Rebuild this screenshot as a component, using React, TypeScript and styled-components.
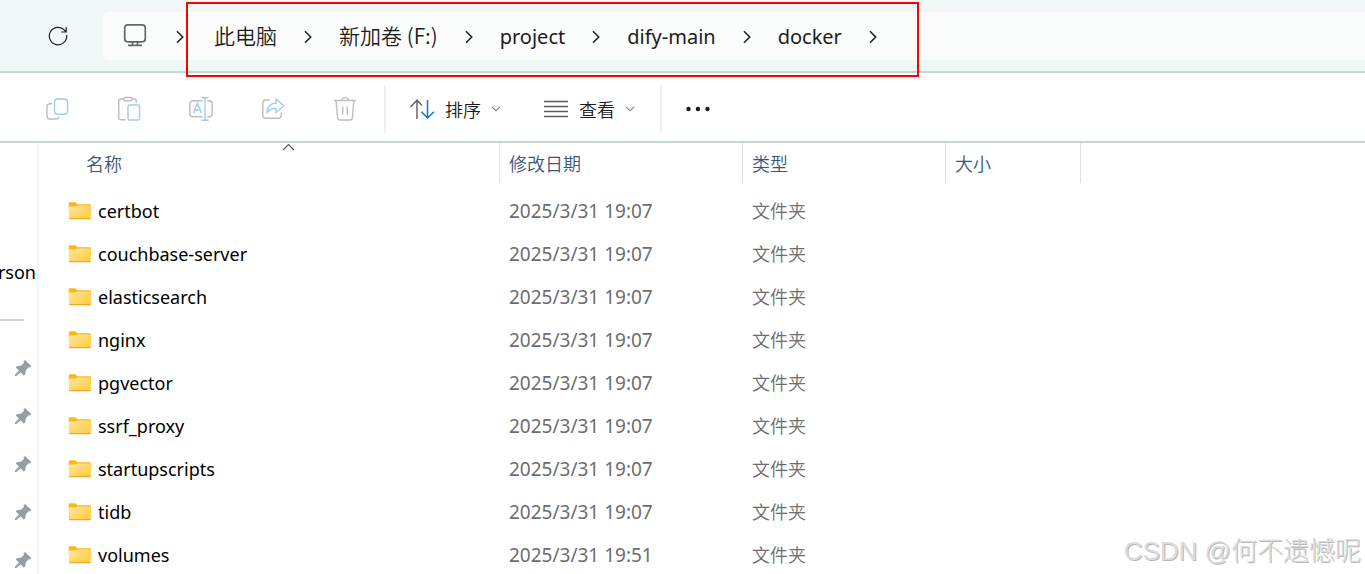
import React from "react";
import styled, { createGlobalStyle } from "styled-components";

const GlobalStyle = createGlobalStyle`
  * { box-sizing: border-box; }
  body {
    margin: 0;
    background: #fff;
    font-family: "Noto Sans", "Noto Sans CJK SC", sans-serif;
    color: #1b1b1b;
  }
  button {
    border: 0;
    padding: 0;
    background: none;
    font: inherit;
    color: inherit;
  }
  svg { display: block; flex: none; }
`;

const Window = styled.div`
  position: relative;
  display: flex;
  flex-direction: column;
  height: 100vh;
  overflow: hidden;
`;

const NavBar = styled.header`
  flex: none;
  display: flex;
  align-items: center;
  height: 73px;
  padding-left: 46px;
  background: #eff7f7;
  border-bottom: 2px solid #c0d9d3;
`;

const RefreshButton = styled.button`
  margin-right: 33px;
`;

const AddressBar = styled.nav`
  flex: 1;
  display: flex;
  align-items: center;
  height: 48px;
  padding-left: 20px;
  background: #fbfdfc;
  border-radius: 6px 0 0 6px;
`;

const RootChevron = styled.button`
  margin: 2px 7px 0 29px;
`;

const Trail = styled.ol`
  position: relative;
  display: flex;
  align-items: center;
  margin: 0;
  padding: 0 0 0 23px;
  list-style: none;

  &::after {
    content: "";
    position: absolute;
    inset: -10px -15px -17px -5px;
    border: 2px solid #fe0000;
    pointer-events: none;
  }
`;

const Crumb = styled.li`
  display: flex;
  align-items: center;
  height: 48px;
`;

const CrumbButton = styled.button<{ $cjk?: boolean }>`
  padding: ${(p) => (p.$cjk ? "0 0 2px" : "2px 0 0")};
  font-size: ${(p) => (p.$cjk ? 21 : 20)}px;
  line-height: 32px;
  font-family: ${(p) => (p.$cjk ? '"Noto Sans CJK SC"' : '"Noto Sans"')}, sans-serif;
  font-weight: ${(p) => (p.$cjk ? 350 : 400)};
  white-space: nowrap;
`;

const CrumbChevron = styled.button`
  display: flex;
  justify-content: center;
  width: 62px;
  padding-top: 2px;
`;

const Toolbar = styled.div`
  flex: none;
  display: flex;
  align-items: center;
  height: 70px;
  padding: 4px 0 0 45px;
  border-bottom: 2px solid #c0d9d3;
`;

const IconGroup = styled.div`
  display: flex;
  align-items: center;
  gap: 48px;
  padding-right: 27px;
`;

const Separator = styled.span`
  width: 2px;
  height: 48px;
  background: #efefef;
`;

const MenuGroup = styled.div`
  display: flex;
  gap: 42px;
  padding: 0 25px 0 23px;
`;

const MenuButton = styled.button`
  display: flex;
  align-items: center;
  gap: 10px;
  font: 350 18px/28px "Noto Sans CJK SC", sans-serif;
`;

const MoreButton = styled.button`
  margin-left: 23px;
`;

const Body = styled.div`
  flex: 1;
  display: flex;
  min-height: 0;
`;

const Sidebar = styled.aside`
  flex: none;
  width: 39px;
  overflow: hidden;
  border-right: 2px solid #f5f5f5;
`;

const AccountName = styled.div`
  display: flex;
  justify-content: flex-end;
  width: 36px;
  margin-top: 114px;
  overflow: hidden;
  font-size: 18px;
  line-height: 30px;
  color: #000;
`;

const SidebarRule = styled.hr`
  width: 24px;
  height: 2px;
  margin: 32px 0 23px;
  border: 0;
  background: #d5d5d5;
`;

const PinList = styled.ul`
  margin: 0;
  padding: 0 0 0 14px;
  list-style: none;
`;

const PinItem = styled.li`
  display: flex;
  align-items: center;
  height: 48px;
`;

const Content = styled.main`
  flex: 1;
  min-width: 0;
  overflow: hidden;
`;

const FileTable = styled.table`
  width: 100%;
  table-layout: fixed;
  border-collapse: separate;
  border-spacing: 0;
`;

const Col = styled.col<{ $width?: number }>`
  width: ${(p) => (p.$width ? `${p.$width}px` : "auto")};
`;

const HeadCell = styled.th<{ $inset?: number }>`
  position: relative;
  height: 40px;
  padding: 0 0 0 ${(p) => p.$inset ?? 9}px;
  border-right: 1px solid #e2e2e2;
  text-align: left;
  font: 350 18px/28px "Noto Sans CJK SC", sans-serif;
  color: #3c5677;

  &:last-child { border-right: 0; }
`;

const SortMark = styled.span`
  position: absolute;
  top: 0;
  left: 243px;
`;

const Rows = styled.tbody`
  &::before {
    content: "";
    display: table-row;
    height: 6px;
  }
`;

const Cell = styled.td`
  height: 43px;
  padding: 0 0 0 9px;
  font-size: 18px;
  line-height: 28px;
  color: #6d6d6d;
  white-space: nowrap;
`;

const DateCell = styled(Cell)`
  font-size: 19px;
`;

const TypeCell = styled(Cell)`
  padding-bottom: 2px;
  font-family: "Noto Sans CJK SC", sans-serif;
  font-weight: 350;
`;

const NameCell = styled(Cell)`
  padding-left: 29px;
  color: #000;
`;

const FileName = styled.span`
  display: flex;
  align-items: center;
  gap: 7px;
`;

const Watermark = styled.div`
  position: absolute;
  right: 4px;
  bottom: 4px;
  font: 300 26px/38px "Liberation Sans", "Noto Sans CJK SC", sans-serif;
  color: #dcdcdc;
  text-shadow: 1px 1px 0 #b8b8b8;
  white-space: nowrap;
  pointer-events: none;
`;

const GREY = "#bdbdbd";
const BLUE = "#9bcdf3";

const Chevron = () => (
  <svg width="8" height="14" viewBox="0 0 8 14" fill="none" stroke="#222" strokeWidth="1.6">
    <path d="M1 1.2 6.7 7 1 12.8" />
  </svg>
);

const SmallDown = () => (
  <svg width="10" height="6" viewBox="0 0 10 6" fill="none" stroke="#777" strokeWidth="1.1">
    <path d="M1 .8 5 4.8 9 .8" />
  </svg>
);

const RefreshIcon = () => (
  <svg width="24" height="24" viewBox="0 0 24 24" fill="none" stroke="#222" strokeWidth="1.2">
    <path d="M20.7 11A8.700 8.700 0 1 1 18.500 6.200L20 8M20.200 3V8H15.200" />
  </svg>
);

const MonitorIcon = () => (
  <svg width="24" height="26" viewBox="0 0 24 26" fill="none" stroke="#666" strokeWidth="1.7">
    <rect x="1.7" y="1.8" width="20.6" height="17" rx="3" />
    <path d="M9.5 19v3M14.5 19v3M5 22.3h14" />
  </svg>
);

const CopyIcon = () => (
  <svg width="24" height="24" viewBox="0 0 24 24" fill="none" strokeWidth="1.4">
    <path stroke={GREY} d="M7.2 6.8H5A3 3 0 0 0 2 9.8V19a3 3 0 0 0 3 3h6.2a3 3 0 0 0 3-2.5" />
    <rect stroke={BLUE} x="9.500" y="2" width="13" height="15.200" rx="3" />
  </svg>
);

const PasteIcon = () => (
  <svg width="24" height="26" viewBox="0 0 24 26" fill="none" strokeWidth="1.4">
    <path stroke={GREY} d="M7 3H3.500A1.800 1.800 0 0 0 1.700 4.800V22A1.800 1.800 0 0 0 3.500 23.800H8.500M15 3h2.500A1.800 1.800 0 0 1 19.300 4.800V7" />
    <rect stroke={GREY} x="6.500" y="1.500" width="8.500" height="3.200" rx="1.600" />
    <rect stroke={BLUE} x="11" y="9" width="11.500" height="15" rx="1.500" />
  </svg>
);

const RenameIcon = () => (
  <svg width="24" height="26" viewBox="0 0 24 26" fill="none" strokeWidth="1.4">
    <path stroke={GREY} fill="#fafafa" d="M13.500 4.800H4A3.200 3.200 0 0 0 .8 8V17.500A3.200 3.200 0 0 0 4 20.700h9.500M18.200 4.800H20A3.200 3.200 0 0 1 23.200 8v9.500A3.200 3.200 0 0 1 20 20.700h-1.800" />
    <path stroke={BLUE} d="M4.500 17 8.500 7.500 12.500 17M5.800 14h5.400M12.500 1.800h7M12.500 24.200h7M16 1.800V24.200" />
  </svg>
);

const ShareIcon = () => (
  <svg width="24" height="24" viewBox="0 0 24 24" fill="none" strokeWidth="1.4">
    <path stroke={GREY} d="M8.500 3H5A3.200 3.200 0 0 0 1.800 6.200V18A3.200 3.200 0 0 0 5 21.200H17A3.200 3.200 0 0 0 20.200 18V15.500" />
    <path stroke={BLUE} strokeLinejoin="round" d="M15 2 22.800 8.800 15 15.500V11.500Q8.500 11.200 6 16 6 6.800 15 6Z" />
  </svg>
);

const TrashIcon = () => (
  <svg width="24" height="26" viewBox="0 0 24 26" fill="none" stroke={GREY} strokeWidth="1.4">
    <path d="M1 4.500H23M8.300 4.500A3.700 2.900 0 0 1 15.700 4.500M3 4.500 4.700 22.300A1.900 1.900 0 0 0 6.600 24H17.400A1.900 1.900 0 0 0 19.300 22.300L21 4.500M9.700 10.500V18.500M14.300 10.500V18.500" />
  </svg>
);

const SortIcon = () => (
  <svg width="26" height="22" viewBox="0 0 26 22" fill="none" strokeWidth="1.5">
    <path stroke="#666" d="M8 21V2M1.500 9 8 2.200 13 7.500" />
    <path stroke="#0b79d0" d="M18.500 2V20.500M12.500 13.700 18.500 20 25 13.700" />
  </svg>
);

const ViewIcon = () => (
  <svg width="26" height="18" viewBox="0 0 26 18" stroke="#5c5c5c" strokeWidth="1.400">
    <path d="M1 1.500H25M1 6.500H25M1 11.500H25M1 16.500H25" />
  </svg>
);

const MoreIcon = () => (
  <svg width="26" height="6" viewBox="0 0 26 6" fill="#1b1b1b">
    <circle cx="3.500" cy="3" r="2.200" />
    <circle cx="12.900" cy="3" r="2.200" />
    <circle cx="22.500" cy="3" r="2.200" />
  </svg>
);

const FolderIcon = () => (
  <svg width="23" height="18" viewBox="0 0 23 18">
    <defs>
      <linearGradient id="folder" x1="0" y1="0" x2="1" y2="1">
        <stop offset="0" stopColor="#ffe6a0" />
        <stop offset="1" stopColor="#ffc937" />
      </linearGradient>
    </defs>
    <path fill="#fbb917" d="M.8 1.200Q.8.200 1.800.200H7.500L9.500 2.300H22Q23 2.300 23 3.300V10H.8Z" />
    <path fill="url(#folder)" d="M1 4.500H7.500L9.200 3.400H22.800V16Q22.800 17 21.800 17H2Q1 17 1 16Z" />
    <path fill="#eda91f" d="M1 16H22.800Q22.800 17.200 21.800 17.200H2Q1 17.200 1 16Z" />
  </svg>
);

const PinIcon = () => (
  <svg width="18" height="18" viewBox="0 0 18 18" fill="#929ea4">
    <path d="M11 1 17.200 6.800 16.300 8.200 14.200 8.500 11.800 11.400 11.200 15.600 9.600 16.400 6.600 13.300 2.300 17 .9 17 1 15.700 4.900 11.500 1.900 8.500 2.800 7.300 6.800 6.800 9.800 4.200 9.700 2.200Z" />
  </svg>
);

const tools = [
  { label: "复制", icon: <CopyIcon /> },
  { label: "粘贴", icon: <PasteIcon /> },
  { label: "重命名", icon: <RenameIcon /> },
  { label: "共享", icon: <ShareIcon /> },
  { label: "删除", icon: <TrashIcon /> },
];

const path = ["此电脑", "新加卷 (F:)", "project", "dify-main", "docker"];

const folders = [
  ["certbot", "2025/3/31 19:07"],
  ["couchbase-server", "2025/3/31 19:07"],
  ["elasticsearch", "2025/3/31 19:07"],
  ["nginx", "2025/3/31 19:07"],
  ["pgvector", "2025/3/31 19:07"],
  ["ssrf_proxy", "2025/3/31 19:07"],
  ["startupscripts", "2025/3/31 19:07"],
  ["tidb", "2025/3/31 19:07"],
  ["volumes", "2025/3/31 19:51"],
];

export default function App() {
  return (
    <Window>
      <GlobalStyle />
      <NavBar>
        <RefreshButton aria-label="刷新"><RefreshIcon /></RefreshButton>
        <AddressBar aria-label="地址">
          <MonitorIcon />
          <RootChevron aria-label="展开"><Chevron /></RootChevron>
          <Trail>
            {path.map((name, i) => (
              <Crumb key={name}>
                <CrumbButton $cjk={i < 2}>{name}</CrumbButton>
                <CrumbChevron aria-label={`展开 ${name}`}><Chevron /></CrumbChevron>
              </Crumb>
            ))}
          </Trail>
        </AddressBar>
      </NavBar>

      <Toolbar role="toolbar">
        <IconGroup>
          {tools.map((t) => (
            <button key={t.label} aria-label={t.label} disabled>{t.icon}</button>
          ))}
        </IconGroup>
        <Separator />
        <MenuGroup>
          <MenuButton><SortIcon />排序<SmallDown /></MenuButton>
          <MenuButton><ViewIcon />查看<SmallDown /></MenuButton>
        </MenuGroup>
        <Separator />
        <MoreButton aria-label="更多"><MoreIcon /></MoreButton>
      </Toolbar>

      <Body>
        <Sidebar>
          <AccountName>Person</AccountName>
          <SidebarRule />
          <PinList>
            {[0, 1, 2, 3, 4].map((n) => (
              <PinItem key={n}><PinIcon /></PinItem>
            ))}
          </PinList>
        </Sidebar>
        <Content>
          <FileTable>
            <colgroup>
              <Col $width={461} />
              <Col $width={243} />
              <Col $width={203} />
              <Col $width={135} />
              <Col />
            </colgroup>
            <thead>
              <tr>
                <HeadCell $inset={47}>
                  名称
                  <SortMark>
                    <svg width="13" height="8" viewBox="0 0 13 8" fill="none" stroke="#555" strokeWidth="1.100">
                      <path d="M1 7 6.500 1.500 12 7" />
                    </svg>
                  </SortMark>
                </HeadCell>
                <HeadCell>修改日期</HeadCell>
                <HeadCell>类型</HeadCell>
                <HeadCell>大小</HeadCell>
                <HeadCell aria-hidden="true" />
              </tr>
            </thead>
            <Rows>
              {folders.map(([name, date]) => (
                <tr key={name}>
                  <NameCell><FileName><FolderIcon />{name}</FileName></NameCell>
                  <DateCell>{date}</DateCell>
                  <TypeCell>文件夹</TypeCell>
                  <Cell />
                  <Cell />
                </tr>
              ))}
            </Rows>
          </FileTable>
        </Content>
      </Body>

      <Watermark>CSDN @何不遗憾呢</Watermark>
    </Window>
  );
}
